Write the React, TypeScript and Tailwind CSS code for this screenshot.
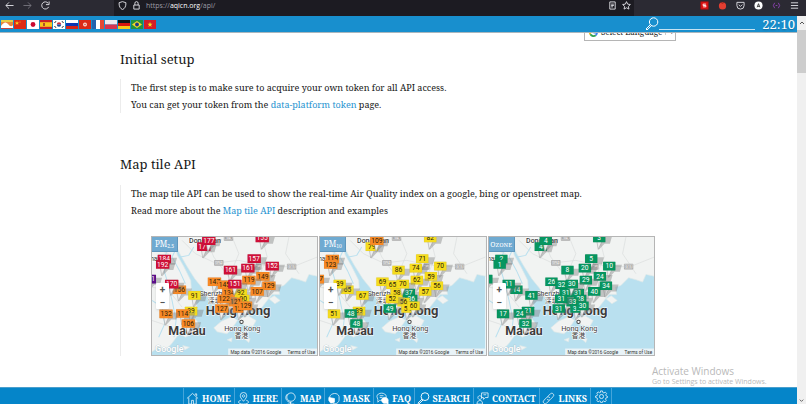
import type { ReactNode } from "react";

type Tone = "g" | "y" | "o" | "r" | "p";
type Reading = { v: string; t: Tone };

const FILL: Record<Tone, string> = {
  g: "#079660",
  y: "#f5dc1e",
  o: "#f88a26",
  r: "#cf1038",
  p: "#5c0f8b",
};

// Monitoring stations, back to front.
const STATIONS: [number, number][] = [
  [155, 29], [330, 3], [37, 66], [32, 82], [-8, 126], [82, 158], [59, 141],
  [117, 222], [92, 229], [42, 230], [109, 259], [127, 175],
  [306, 65], [235, 99], [287, 93], [360, 87], [332, 118], [290, 129],
  [187, 134], [217, 143], [350, 146], [230, 168], [266, 168], [273, 186],
  [315, 163], [250, 195], [216, 185], [248, 141], [209, 214], [262, 214],
  [280, 206], [170, 11],
];

const parse = (s: string): Reading[] =>
  s.split(" ").map((p) => ({ t: p[0] as Tone, v: p.slice(1) }));

const PM25 = parse(
  "r171 r155 r184 r192 p201 o156 r170 y89 o114 o132 o106 y91 r157 r161 r161 r152 o149 o119 o147 o145 o129 o134 y92 y90 o107 o121 o122 r151 o127 o125 o129 r177",
);
const PM10 = parse(
  "y79 y82 o119 o123 o107 y65 y39 y39 g48 y51 g48 y67 y71 y86 y74 y70 y59 y62 y69 y65 y56 y58 g37 g36 y57 y56 y52 y70 g49 y54 y60 o109",
);
const OZONE = parse(
  "g4 g3 g2 g1 g2 g14 g11 g21 g24 g17 g32 g41 g5 g8 g20 g10 g24 g29 g26 g32 g34 g31 g31 g28 g40 g33 g31 g30 g31 g30 g30 g4",
);

function Marker({ x, y, r }: { x: number; y: number; r: Reading }) {
  const w = r.v.length > 2 ? 40 : 37;
  return (
    <g transform={`translate(${x} ${y})`}>
      <path d="M-2 36 L4 14 L8 -4 H38 L32 17 H16 Z" fill="#777" opacity="0.4" />
      <path d="M-7 10 L-3 34 L8 10 Z" fill="#eee" stroke="#999" strokeWidth="1.5" />
      <rect x={-w / 2} y="-13" width={w} height="26" rx="1" fill={FILL[r.t]} stroke="#0002" />
      <text
        y="7"
        textAnchor="middle"
        fontSize="20"
        fill={r.t === "y" || r.t === "o" ? "#29200a" : "#fff"}
      >
        {r.v}
      </text>
    </g>
  );
}

function MapCard({ label, readings, name }: { label: ReactNode; readings: Reading[]; name: string }) {
  return (
    <figure className="relative overflow-hidden border border-[#b5b5b5]">
      <svg viewBox="0 0 495 354" className="block w-full font-[Roboto,'Noto_Sans_CJK_TC',sans-serif]" role="img" aria-label={name}>
        <rect width="495" height="354" fill="#b9e0ef" />
        <g fill="#f1f3f2" stroke="#dce9e9" strokeWidth="2">
          <path d="M60 -2 H498 V118 L470 112 L460 135 L440 128 L418 122 L395 145 L378 150 L382 172 L360 172 L345 190 L328 212 L298 222 L262 213 L235 222 L212 232 L192 224 L204 212 L172 186 L150 152 L128 125 L103 85 L83 50 Z" />
          <path d="M-2 -2 H60 L76 55 L96 90 L116 130 L118 160 L134 205 L125 240 L142 262 L128 286 L100 300 L82 288 L60 318 L40 340 L20 330 L-2 345 Z" />
          <path d="M185 272 L208 252 L240 238 L256 250 L242 270 L225 290 L195 284 Z" />
          <path d="M256 244 L288 236 L312 250 L302 268 L270 262 Z" />
          <path d="M350 185 L366 176 L384 190 L368 200 Z" />
          <path d="M225 308 L240 302 L238 314 Z M278 306 L294 304 L290 316 Z M92 325 L112 330 L98 338 Z" />
        </g>
        <g fill="none" stroke="#b9e0ef" strokeWidth="3">
          <path d="M60 0 L72 35 L60 60 L82 100 L100 140 M40 0 L46 40 L30 80 L45 130 L60 190 L72 250 L66 300 M85 60 L110 55 L125 30" />
          <path d="M0 190 L30 210 L38 260 L20 300" />
        </g>
        <g fill="none" stroke="#dadddd" strokeWidth="2">
          <path d="M90 10 L130 50 L190 78 L260 70 L330 85 L420 90 L495 60 M160 0 L185 60 L230 120 L290 150 M330 0 L345 60 L320 120 M410 0 L400 50 L440 110 M240 0 L260 50 L235 110 M0 30 L50 50 M0 150 L50 160 L90 210 M0 250 L60 270" />
        </g>
        <g>
          {[[200, 78, "G94"], [314, 90, "S29"], [418, 89, "G15"], [229, 3, "G4"]].map(([x, y, t]) => (
            <g key={String(t)} transform={`translate(${x} ${y})`}>
              <rect x="-14" y="-9" width="28" height="17" rx="2" fill="#aaa" />
              <rect x="-11" y="-6" width="22" height="11" fill="none" stroke="#eee" />
              <text y="4" fontSize="10" textAnchor="middle" fill="#fff">{t}</text>
            </g>
          ))}
        </g>
        <g fill="#3c3c3c" stroke="#fff" strokeWidth="3" paintOrder="stroke">
          <text x="111" y="17" fontSize="21" fontWeight="500">Dongguan</text>
          <text x="-38" y="72" fontSize="20">Foshan</text>
          <text x="142" y="178" fontSize="21">Shenzhen</text>
          <text x="168" y="199" fontSize="20">深圳</text>
          <text x="161" y="234" fontSize="39" fontWeight="700">Hong Kong</text>
          <text x="49" y="293" fontSize="37" fontWeight="700">Macau</text>
          <text x="216" y="280" fontSize="22">Hong Kong</text>
          <text x="248" y="301" fontSize="20">香港</text>
        </g>
        <circle cx="268" cy="254" r="5" fill="#fff" stroke="#444" strokeWidth="3" />
        {STATIONS.map(([x, y], i) => (
          <Marker key={i} x={x} y={y} r={readings[i]} />
        ))}
        <text x="9" y="344" fontSize="27" fontWeight="500" fill="#fff" stroke="#aebfc6" strokeWidth="2" paintOrder="stroke">Google</text>
        <rect x="228" y="334" width="267" height="20" fill="#f5f8f9" opacity="0.8" />
        <text x="235" y="350" fontSize="14" fill="#333">Map data ©2016 Google</text>
        <a href="#terms">
          <text x="406" y="350" fontSize="14" fill="#333">Terms of Use</text>
        </a>
      </svg>
      <figcaption className="absolute top-0 left-0 flex h-[15px] w-[26px] items-center justify-center border-r border-b border-[#5e96bd] bg-[#6faad1] font-['Noto_Serif','Liberation_Serif',serif] text-[8px] leading-none text-white">
        {label}
      </figcaption>
      <div className="absolute top-[46px] left-1 flex w-[13px] flex-col rounded-[1px] bg-white font-[Roboto,sans-serif] text-[10px] leading-none font-bold text-[#555] shadow-sm">
        <button aria-label="Zoom in" className="h-[13px]">+</button>
        <button aria-label="Zoom out" className="h-[13px]">−</button>
      </div>
    </figure>
  );
}

const FLAGS: [string, ReactNode][] = [
  ["All languages", <><rect width="12" height="9" fill="#e9873d" /><path d="M0 6 Q4 0 7 4 T12 5 V8 H0Z" fill="#fff" /><path d="M0 0H12V2H0Z" fill="#e6cf45" /><path d="M0 8H12V9H0Z" fill="#c3453f" /></>],
  ["Chinese", <><rect width="12" height="9" fill="#dc2a16" /><path d="M3 1l.6 1.4H5L4 3.4l.4 1.4L3 4 1.6 4.8 2 3.4 1 2.4h1.4z" fill="#fbd11b" /><circle cx="6" cy="2" r=".5" fill="#fbd11b" /></>],
  ["Japanese", <><rect width="12" height="9" fill="#fff" /><circle cx="6" cy="4.5" r="2.4" fill="#c80a32" /></>],
  ["Spanish", <><rect width="12" height="9" fill="#c8232b" /><rect y="2.2" width="12" height="4.6" fill="#fbc61c" /><rect x="3" y="3" width="2" height="3" fill="#b0502b" /></>],
  ["Korean", <><rect width="12" height="9" fill="#fff" /><path d="M3.8 4.5a2.2 2.2 0 0 1 4.4 0z" fill="#cd2e3a" /><path d="M3.8 4.5a2.2 2.2 0 0 0 4.4 0z" fill="#164a9c" /><path d="M1.5 3l1.5-1.8M9 1.2L10.5 3M1.5 6L3 7.8M9 7.8L10.5 6" stroke="#222" /></>],
  ["Russian", <><rect width="12" height="3" fill="#fff" /><rect y="3" width="12" height="3" fill="#0c37b4" /><rect y="6" width="12" height="3" fill="#d62517" /></>],
  ["Cantonese", <><rect width="12" height="9" fill="#dc2a16" /><circle cx="6" cy="4.5" r="2" fill="#f8d5ca" /><circle cx="6" cy="4.5" r=".7" fill="#dc2a16" /></>],
  ["French", <><rect width="4" height="9" fill="#2462ad" /><rect x="4" width="4" height="9" fill="#fff" /><rect x="8" width="4" height="9" fill="#e54935" /></>],
  ["Polish", <><rect width="12" height="4.5" fill="#efe9ee" /><rect y="4.5" width="12" height="4.5" fill="#d83450" /></>],
  ["German", <><rect width="12" height="3" fill="#151515" /><rect y="3" width="12" height="3" fill="#d9160e" /><rect y="6" width="12" height="3" fill="#fac819" /></>],
  ["Portuguese", <><rect width="12" height="9" fill="#219340" /><path d="M6 1l5 3.5-5 3.5-5-3.5z" fill="#f8d82a" /><circle cx="6" cy="4.5" r="1.9" fill="#1d3a85" /></>],
  ["Vietnamese", <><rect width="12" height="9" fill="#d21e28" /><path d="M6 2l.7 1.8h1.8L7 5l.6 1.9L6 5.8 4.4 6.9 5 5 3.5 3.8h1.8z" fill="#fbe11b" /></>],
];

const Magnifier = ({ className }: { className: string }) => (
  <svg viewBox="0 0 14 14" fill="none" stroke="currentColor" className={className} aria-hidden="true">
    <circle cx="8.6" cy="5" r="4.2" />
    <path d="M5.4 7.6L1 12l1 1 4.5-4.4" />
  </svg>
);

const NAV: [string, string, ReactNode][] = [
  ["HOME", "w-[51px]", <path d="M1 7l6-5.5L13 7M3 6v7h3V9h2v4h3V6M10 3V2h1.5v2.5" />],
  ["HERE", "w-[47px]", <path d="M7 10C4.500 7 3.500 5.600 3.500 4a3.500 3.500 0 0 1 7 0C10.500 5.600 9.500 7 7 10zM7 3a1.300 1.300 0 1 0 .1 0M4 9C0 10 1 13 7 13s7-3 3-4" />],
  ["MAP", "w-[43px]", <path d="M7.500 1a4.500 4.500 0 1 0 .1 0M4 2C0 5 2 11 8 11.500M7 11v2M4 13h7" />],
  ["MASK", "w-[49px]", <><path d="M3 5c1-4 9-5 10 0v4c-1 4-5 4-7 3L3 9z" /><path d="M2 6l6 1v4l-4 1-2-3z" fill="currentColor" /></>],
  ["FAQ", "w-[41px]", <><path d="M1 5c0-5 10-5 10 0s-5 4-7 4l-2 2V8z" /><path d="M6 8c2-4 8-2 7 2v3l-2-1c-4 1-5-2-5-4z" fill="currentColor" /><path d="M4 4h4M4 6h3" /></>],
  ["SEARCH", "w-[59px]", null],
  ["CONTACT", "w-[66px]", <path d="M6 1h7v5h-3L8 8V6H6zM4 4a2 2 0 1 0 .1 0M1 13c0-5 6-5 6-1v1zM8 3h3" />],
  ["LINKS", "w-[51px]", <path d="M6 5l3-3c2-2 5 1 3 3L9 8C8 9 6 9 5.500 7.500M8 9l-3 3c-2 2-5-1-3-3l3-3c1-1 3-1 3.500.5" />],
];

const icon = "size-[13px] shrink-0";

function ChromeIcon({ children, className = "" }: { children: ReactNode; className?: string }) {
  return (
    <svg viewBox="0 0 10 10" fill="none" stroke="currentColor" className={`block size-[9px] shrink-0 ${className}`} aria-hidden="true">
      {children}
    </svg>
  );
}

function BrowserBar() {
  return (
    <div className="flex h-4 shrink-0 items-center bg-[#2b2a33] pb-[5px] text-[#e4e4ea]">
      <div className="flex w-[114px] items-center gap-[9px] pl-[5px]">
        <button aria-label="Back"><ChromeIcon><path d="M9.500 5H1M4.500 1.500L1 5l3.500 3.500" /></ChromeIcon></button>
        <button aria-label="Forward" className="text-[#76757e]"><ChromeIcon><path d="M.5 5H9M5.500 1.500L9 5 5.500 8.500" /></ChromeIcon></button>
        <button aria-label="Reload"><ChromeIcon><path d="M8.500 6.500A4 4 0 1 1 8 2.500M9 .5V4H5.500" /></ChromeIcon></button>
      </div>
      <div className="-mb-[5px] flex h-4 flex-1 items-center gap-[5px] bg-[#1c1b22] pr-[3px] pb-[5px] pl-1">
        <ChromeIcon><path d="M5 .7l3.800 1.200C9 6 7.500 8.500 5 9.500 2.500 8.500 1 6 1.200 1.900z" /></ChromeIcon>
        <ChromeIcon><path d="M2 4.500h6v4.500H2zM3.200 4.500V2.500a1.800 1.800 0 0 1 3.600 0v2" /></ChromeIcon>
        <div className="flex-1 font-['Open_Sans',sans-serif] text-[7px] leading-[11px] text-[#9c9ba4]">
          https://<span className="text-[#fbfbfe]">aqicn.org</span>/api/
        </div>
        <ChromeIcon><path d="M2 1h6v8H2zM3.500 3.500h3M3.500 5h3M3.500 6.500h2" /></ChromeIcon>
        <ChromeIcon><path d="M5 .7l1.300 2.800 3 .4-2.200 2.100.6 3L5 7.500 2.300 9l.6-3L.7 3.900l3-.4z" /></ChromeIcon>
      </div>
      <div className="flex w-[172px] items-center justify-end gap-[9px] pr-[7px]">
        <ChromeIcon><rect x="1" y="1" width="8" height="8" fill="#e31616" stroke="#b40d0d" /><path d="M6.500 3.500h-3V5h3v1.500h-3" stroke="#fff" /></ChromeIcon>
        <ChromeIcon><circle cx="5" cy="5.500" r="4" fill="#e43e31" stroke="none" /><path d="M3 1.500l2 1 2-1" stroke="#8d1f1a" /></ChromeIcon>
        <ChromeIcon><path d="M1 1.500h8V5a4 4 0 0 1-8 0zM3 4l2 2 2-2" /></ChromeIcon>
        <ChromeIcon><circle cx="5" cy="5" r="4.500" fill="#fff" stroke="none" /><path d="M3.500 7L5 3l1.500 4M4 6h2" stroke="#333" /></ChromeIcon>
        <ChromeIcon className="text-[#8f43b5]"><path d="M3 2Q0 5 3 8M7 2q3 3 0 6M4 5h2" /></ChromeIcon>
        <button aria-label="Menu"><ChromeIcon><path d="M1 2h8M1 5h8M1 8h8" /></ChromeIcon></button>
      </div>
    </div>
  );
}

export default function App() {
  return (
    <div className="flex h-screen flex-col overflow-hidden bg-white font-['Noto_Serif','Droid_Serif','Liberation_Serif',serif] text-[#161616]">
      <BrowserBar />
      <div className="flex min-h-0 flex-1">
        <div className="flex min-w-0 flex-1 flex-col">
          <header className="z-10 flex h-[17px] shrink-0 items-center border-b border-[#a9b6bd] bg-[#188fce] text-white">
            <nav aria-label="Languages" className="flex flex-1 gap-[1px] pl-[1px]">
              {FLAGS.map(([name, art]) => (
                <a key={name} href="#language" aria-label={name}>
                  <svg viewBox="0 0 12 9" className="block h-[9px] w-3">{art}</svg>
                </a>
              ))}
            </nav>
            <label htmlFor="city" aria-label="Search city"><Magnifier className="size-[14px]" /></label>
            <input id="city" className="mr-[7px] h-[11px] w-[96px] border-b border-[#c5e3f3] bg-transparent text-[8px] outline-none" />
            <time className="pr-[2px] text-[13px] leading-4 text-shadow-sm">22:10</time>
          </header>

          <main className="relative min-h-0 flex-1 overflow-hidden pr-[121px] pl-[120px]">
            <div className="-mt-[10px] flex justify-end">
              <button className="flex h-[18px] w-[92px] items-center border border-[#b5b5b5] pl-1 text-[8px] leading-none whitespace-nowrap">
                <svg viewBox="0 0 10 10" fill="none" strokeWidth="2" className="mr-[3px] size-[9px] shrink-0" aria-hidden="true">
                  <path d="M8.500 2.500A4 4 0 0 0 1.500 3" stroke="#e54335" />
                  <path d="M1.500 3a4 4 0 0 0 0 4" stroke="#f6b704" />
                  <path d="M1.500 7a4 4 0 0 0 6 1" stroke="#34a353" />
                  <path d="M7.500 8A4 4 0 0 0 9 5H5" stroke="#4280ef" />
                </svg>
                Select Language
                <span className="ml-[3px] border-l border-[#ccc] pl-[3px] text-[5px]">▼</span>
              </button>
            </div>

            <section>
              <h2 className="mt-2 text-[13px] leading-5">Initial setup</h2>
              <div className="mt-[10px] border-l border-[#ececec] pl-[10px] text-[9px] leading-[17px]">
                <p>The first step is to make sure to acquire your own token for all API access.</p>
                <p>You can get your token from the <a href="#token" className="text-[#1f93d0]">data-platform token</a> page.</p>
              </div>
            </section>

            <section className="mt-[41px]">
              <h2 className="text-[13px] leading-5">Map tile API</h2>
              <div className="mt-[11px] border-l border-[#ececec] pl-[10px] text-[9px] leading-[17px]">
                <p>The map tile API can be used to show the real-time Air Quality index on a google, bing or openstreet map.</p>
                <p>Read more about the <a href="#tiles" className="text-[#1f93d0]">Map tile API</a> description and examples</p>
                <div className="mt-[17px] ml-5 grid max-w-[504px] grid-cols-3 gap-[1px]">
                  <MapCard name="PM2.5 map" readings={PM25} label={<span>PM<sub className="text-[5px]">2.5</sub></span>} />
                  <MapCard name="PM10 map" readings={PM10} label={<span>PM<sub className="text-[5px]">10</sub></span>} />
                  <MapCard name="Ozone map" readings={OZONE} label={<span className="text-[7px] [font-variant:small-caps]">Ozone</span>} />
                </div>
              </div>
            </section>

            <aside className="absolute right-[26px] bottom-0 w-[119px] font-['Open_Sans',sans-serif] whitespace-nowrap text-[#b9b9b9]">
              <p className="text-[10px] leading-3">Activate Windows</p>
              <p className="text-[7px] leading-[10px]">Go to Settings to activate Windows.</p>
            </aside>
          </main>

          <nav aria-label="Main" className="flex h-[17px] shrink-0 justify-center overflow-hidden border-t border-[#4a9fcd] bg-[#0585c9] pr-[2px] text-[9px] font-bold text-white">
            {NAV.map(([name, width, art]) => (
              <a key={name} href={`#${name.toLowerCase()}`} className={`flex h-[21px] shrink-0 items-center justify-between border-l border-[#45a5da] pr-[3px] pl-[2px] ${width}`}>
                {art ? (
                  <svg viewBox="0 0 14 14" fill="none" stroke="currentColor" strokeWidth="0.8" className={icon} aria-hidden="true">{art}</svg>
                ) : (
                  <Magnifier className={icon} />
                )}
                {name}
              </a>
            ))}
            <button aria-label="Settings" className="flex h-4 w-[22px] shrink-0 items-center border-x border-[#45a5da] pl-1">
              <svg viewBox="0 0 14 14" fill="none" stroke="currentColor" strokeWidth="0.8" className={icon} aria-hidden="true">
                <circle cx="7" cy="7" r="2.200" />
                <path d="M6 1h2l.4 1.700 1.200.5 1.500-.9 1.400 1.400-.9 1.500.5 1.200L13.500 7v1l-1.700.6-.5 1.200.9 1.500-1.400 1.400-1.500-.9-1.200.5L7.500 14h-1L6 12.300l-1.200-.5-1.500.9-1.400-1.400.9-1.500-.5-1.200L.6 8V6.500l1.700-.4.5-1.200-.9-1.500 1.400-1.400 1.500.9L6 2.500z" />
              </svg>
            </button>
          </nav>
        </div>

        <div className="flex w-[9px] shrink-0 flex-col items-center bg-[#f0f0f0] text-[#555]" aria-hidden="true">
          <svg viewBox="0 0 8 8" fill="none" stroke="currentColor" className="my-[3px] size-[8px] shrink-0"><path d="M2 5l2-2 2 2" /></svg>
          <div className="h-[43px] w-full shrink-0 bg-[#cdcdcd]" />
          <svg viewBox="0 0 8 8" fill="none" stroke="currentColor" className="mt-auto size-[7px] shrink-0"><path d="M2 3l2 2 2-2" /></svg>
        </div>
      </div>
    </div>
  );
}
